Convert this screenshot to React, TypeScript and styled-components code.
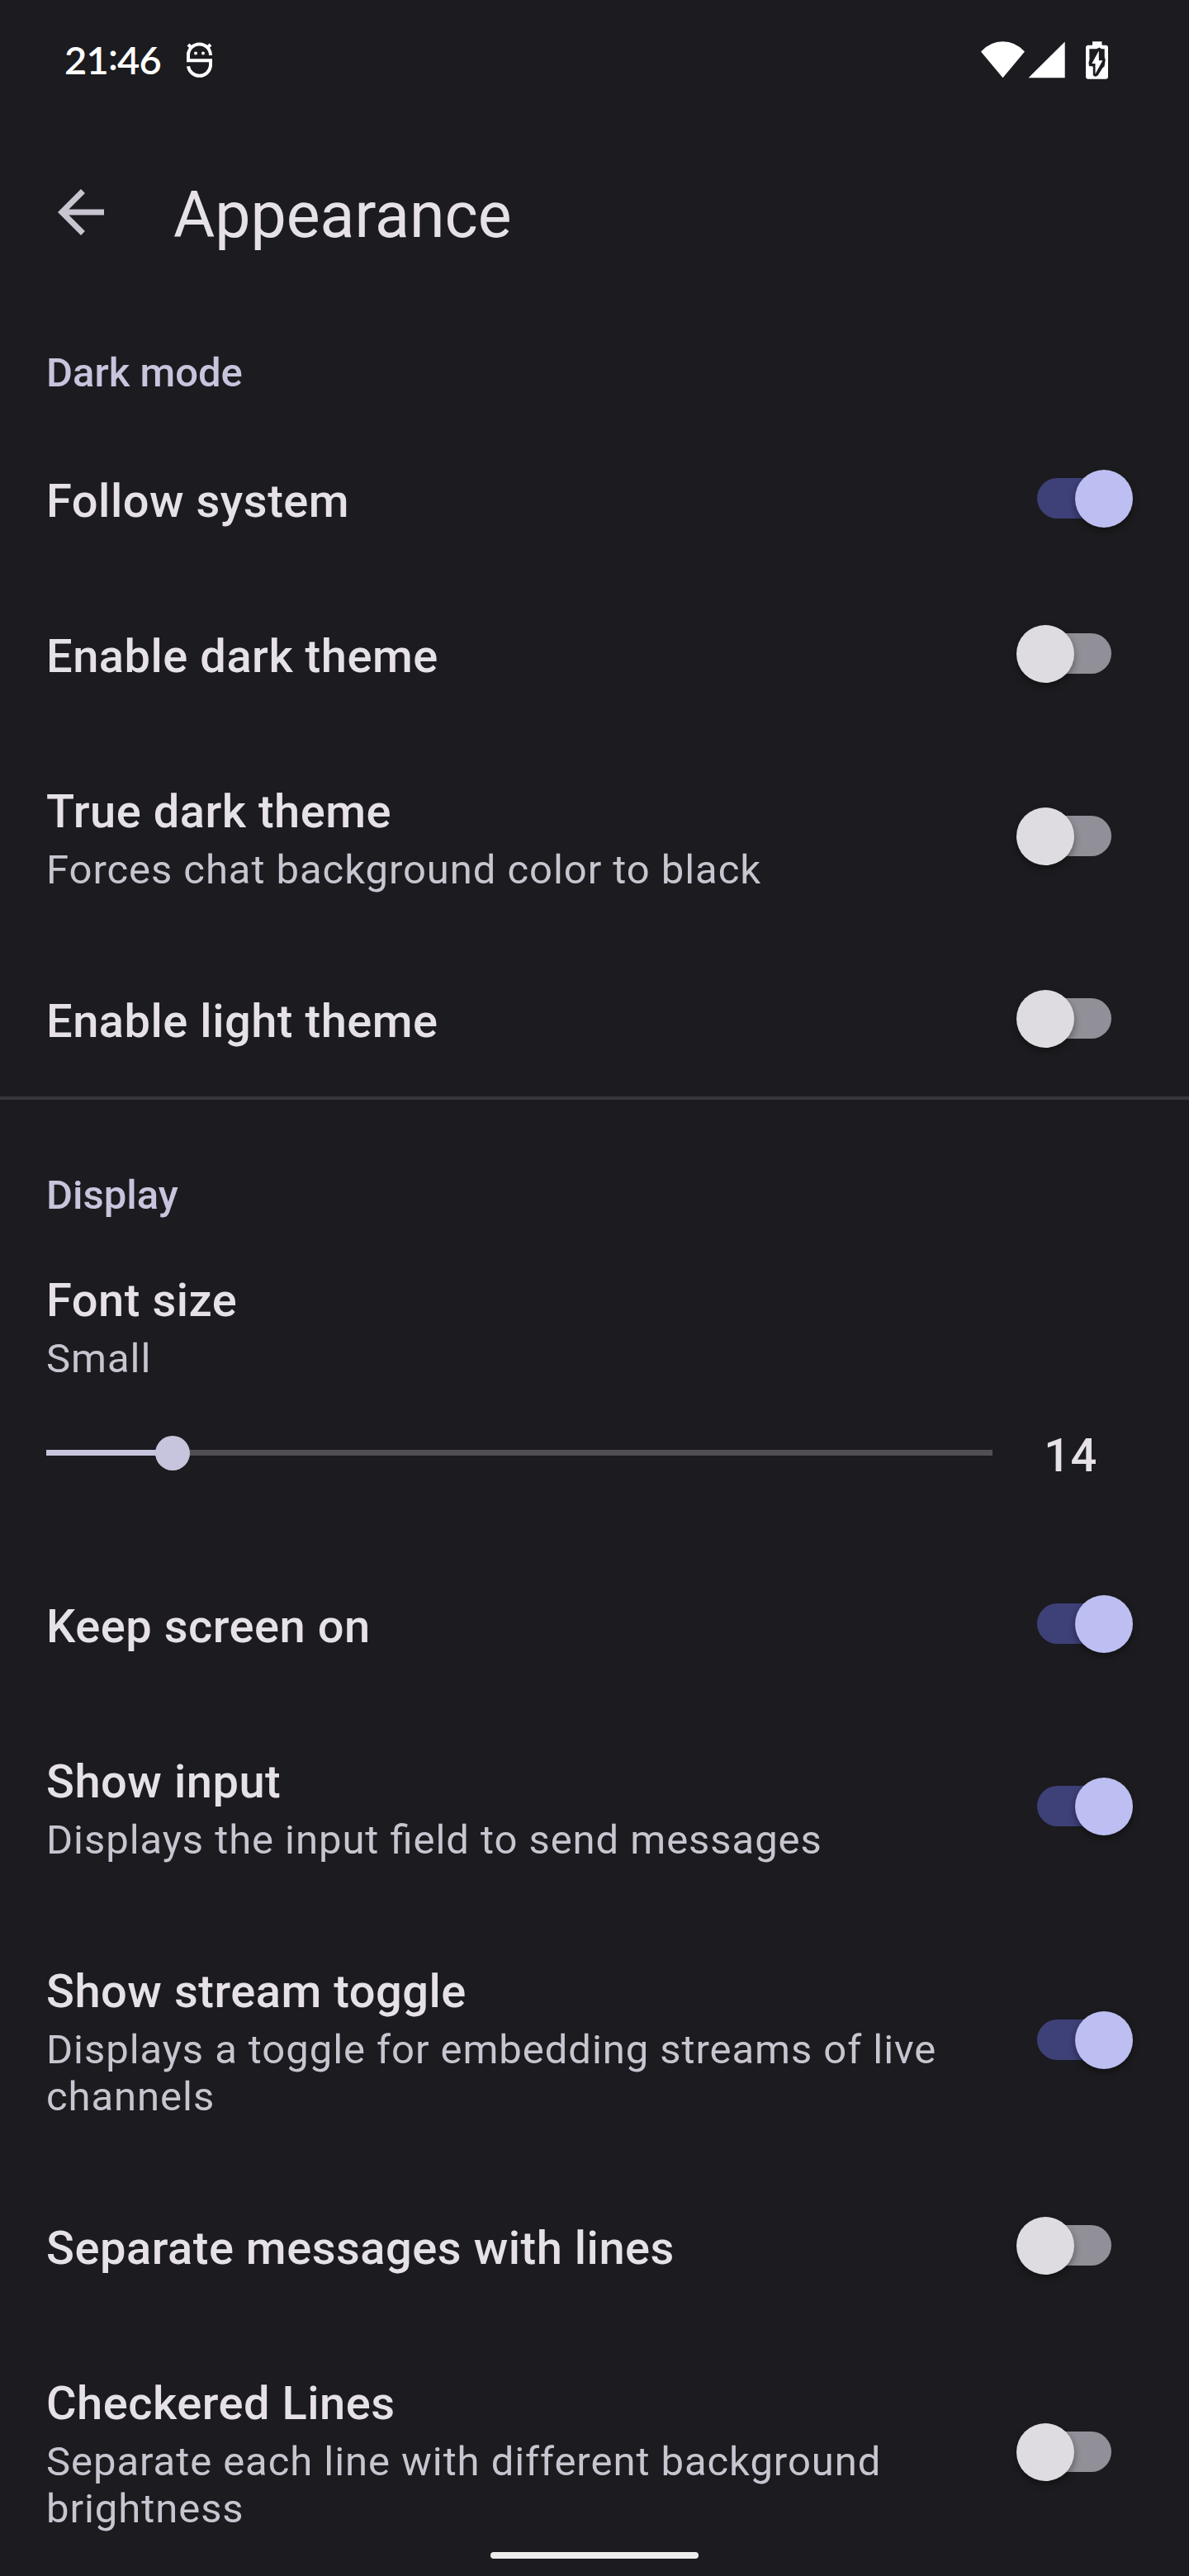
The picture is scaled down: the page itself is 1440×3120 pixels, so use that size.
import React, { useState } from "react";
import styled, { createGlobalStyle } from "styled-components";

const colors = {
  surface: "#1c1b1f",
  onSurface: "#e5e1e6",
  onSurfaceVariant: "#c8c5d0",
  secondary: "#c7c4dd",
  primary: "#bdbef1",
  primaryContainer: "#3e4078",
};

const GlobalStyle = createGlobalStyle`
  *, *::before, *::after { box-sizing: border-box; }
  body { margin: 0; background: ${colors.surface}; }
`;

const Screen = styled.div`
  position: relative;
  display: flex;
  flex-direction: column;
  width: 1440px;
  height: 3120px;
  overflow: hidden;
  background: ${colors.surface};
  color: ${colors.onSurface};
  font-family: Roboto, sans-serif;
  font-feature-settings: "liga" 1;
`;

const StatusBar = styled.header`
  display: flex;
  flex: none;
  justify-content: space-between;
  height: 145px;
  padding: 0 98px 0 78px;
  color: #fff;
`;

const StatusGroup = styled.div`
  display: flex;
  align-items: flex-start;
`;

const Clock = styled.time`
  width: 140px;
  padding-top: 44px;
  font: 600 47px/57px Lato, sans-serif;
  letter-spacing: -0.8px;
  white-space: nowrap;
`;

const Colon = styled.span`
  position: relative;
  top: -5px;
`;

const NotificationIcon = styled.svg`
  display: block;
  width: 44px;
  height: 50px;
  margin-top: 48px;
`;

const SystemIcons = styled.svg`
  display: block;
  width: 160px;
  height: 50px;
  margin-top: 48px;
`;

const AppBar = styled.div`
  display: flex;
  flex: none;
  align-items: center;
  height: 224px;
  padding-left: 56px;
`;

const BackButton = styled.button`
  display: flex;
  width: 84px;
  height: 84px;
  padding: 0;
  border: 0;
  background: none;
  color: ${colors.onSurfaceVariant};
`;

const Title = styled.h1`
  margin: 8px 0 0 70px;
  font-size: 77px;
  font-weight: 400;
  line-height: 90px;
`;

const List = styled.main`
  display: flex;
  flex: none;
  flex-direction: column;
  height: 2699px;
  overflow: hidden;
`;

const Divider = styled.hr`
  flex: none;
  width: 100%;
  height: 4px;
  margin: 0 0 33px;
  border: 0;
  background: #37363a;
`;

const Category = styled.h2`
  flex: none;
  height: 141px;
  margin: 0;
  padding: 54px 56px 0;
  color: ${colors.secondary};
  font-size: 49px;
  font-weight: 500;
  line-height: 57px;
`;

const Row = styled.label`
  display: flex;
  flex: none;
  align-items: center;
  justify-content: space-between;
  padding: 64px 66px 58px 56px;
`;

const Texts = styled.div`
  width: 1120px;
`;

const Label = styled.div`
  font-size: 56px;
  font-weight: 500;
  line-height: 66px;
  letter-spacing: 0.525px;
`;

const Summary = styled.div`
  margin-top: 9px;
  color: ${colors.onSurfaceVariant};
  font-size: 49px;
  line-height: 57px;
  letter-spacing: 0.94px;
`;

const Track = styled.button<{ $on: boolean }>`
  position: relative;
  flex: none;
  width: 90px;
  height: 49px;
  margin: 0 28px 7px 0;
  padding: 0;
  border: 0;
  border-radius: 25px;
  background: ${(p) => (p.$on ? colors.primaryContainer : "#918f97")};

  &::after {
    content: "";
    position: absolute;
    top: -10px;
    left: ${(p) => (p.$on ? "46px" : "-25.5px")};
    width: 70px;
    height: 70px;
    border-radius: 50%;
    background: ${(p) => (p.$on ? colors.primary : "#dedce1")};
    box-shadow: 0 4px 8px rgba(0, 0, 0, 0.38);
  }
`;

const SliderPreference = styled.section`
  flex: none;
  height: 367px;
  padding: 36px 49px 0 56px;
`;

const SliderLine = styled.div`
  display: flex;
  align-items: center;
  height: 84px;
  margin-top: 44px;
`;

const SliderTrack = styled.div`
  position: relative;
  flex: none;
  width: 1146px;
  height: 7px;
  margin-bottom: 1px;
  background: #504e54;
`;

const SliderFill = styled.div`
  position: relative;
  height: 7px;
  background: ${colors.secondary};

  &::after {
    content: "";
    position: absolute;
    top: -17px;
    right: -21px;
    width: 42px;
    height: 42px;
    border-radius: 50%;
    background: ${colors.secondary};
  }
`;

const SliderValue = styled.output`
  flex: 1;
  padding-top: 6px;
  text-align: center;
  font-size: 56px;
  font-weight: 500;
  line-height: 66px;
  letter-spacing: 0.525px;
`;

const GestureHandle = styled.div`
  position: absolute;
  left: 594px;
  bottom: 21px;
  width: 252px;
  height: 8px;
  border-radius: 4px;
  background: #ececec;
`;

function Preference({ label, summary, on = false }: { label: string; summary?: string; on?: boolean }) {
  const [checked, setChecked] = useState(on);
  return (
    <Row>
      <Texts>
        <Label>{label}</Label>
        {summary && <Summary>{summary}</Summary>}
      </Texts>
      <Track $on={checked} role="switch" aria-checked={checked} aria-label={label} onClick={() => setChecked(!checked)} />
    </Row>
  );
}

function FontSizePreference({ value, min, max }: { value: number; min: number; max: number }) {
  return (
    <SliderPreference>
      <Label>Font size</Label>
      <Summary>Small</Summary>
      <SliderLine>
        <SliderTrack>
          <SliderFill style={{ width: `${((value - min) / (max - min)) * 100}%` }} />
        </SliderTrack>
        <SliderValue>{value}</SliderValue>
      </SliderLine>
    </SliderPreference>
  );
}

export default function App() {
  return (
    <Screen>
      <GlobalStyle />
      <StatusBar>
        <StatusGroup>
          <Clock>
            21<Colon>:</Colon>46
          </Clock>
          <NotificationIcon viewBox="218 48 44 50" fill="none" stroke="#fff" strokeWidth="4">
            <path d="M228 63.5V73.2H255V79.5A13.6 13.6 0 0 1 228 80.2M228 73V67A13.5 13.5 0 0 1 255 67" />
            <path d="M228 54l4 4M255 54l-4 4" strokeWidth="4" />
            <circle cx="237" cy="64.5" r="2" fill="#fff" stroke="none" />
            <circle cx="246" cy="64.5" r="2" fill="#fff" stroke="none" />
          </NotificationIcon>
        </StatusGroup>
        <StatusGroup>
          <SystemIcons viewBox="1182 48 160 50" fill="#fff">
            <path d="M1188 62.4Q1199.500 50.300 1214.500 50.300T1241 62.400L1214.500 94.300Z" />
            <path d="M1289.700 50.500V94.300H1245.600Z" />
            <path d="M1323 50.300H1334.500V54.700H1339Q1342 54.700 1342 57.700V92.700Q1342 95.700 1339 95.700H1318Q1315 95.700 1315 92.700V57.700Q1315 54.700 1318 54.700H1323Z" />
            <path
              d="M1319.300 59.200H1328L1331.500 57.400L1334 59.200H1337.700V69L1338.700 72.500L1337.500 80.500L1335.500 82L1329.500 91.500Q1326 94 1323.800 91V80.500L1319 80L1318.500 76L1319.500 72Z"
              fill={colors.surface}
            />
            <path d="M1330.800 61.500V73.200H1335.400L1326.500 89.800V77H1322.300Z" />
          </SystemIcons>
        </StatusGroup>
      </StatusBar>
      <AppBar>
        <BackButton aria-label="Back">
          <svg width="84" height="84" viewBox="0 0 24 24" fill="currentColor">
            <path d="M20 11H7.830l5.590-5.590L12 4l-8 8 8 8 1.410-1.410L7.830 13H20v-2z" />
          </svg>
        </BackButton>
        <Title>Appearance</Title>
      </AppBar>
      <List>
        <Category>Dark mode</Category>
        <Preference label="Follow system" on />
        <Preference label="Enable dark theme" />
        <Preference label="True dark theme" summary="Forces chat background color to black" />
        <Preference label="Enable light theme" />
        <Divider />
        <Category>Display</Category>
        <FontSizePreference value={14} min={10} max={40} />
        <Preference label="Keep screen on" on />
        <Preference label="Show input" summary="Displays the input field to send messages" on />
        <Preference label="Show stream toggle" summary="Displays a toggle for embedding streams of live channels" on />
        <Preference label="Separate messages with lines" />
        <Preference label="Checkered Lines" summary="Separate each line with different background brightness" />
      </List>
      <GestureHandle />
    </Screen>
  );
}
